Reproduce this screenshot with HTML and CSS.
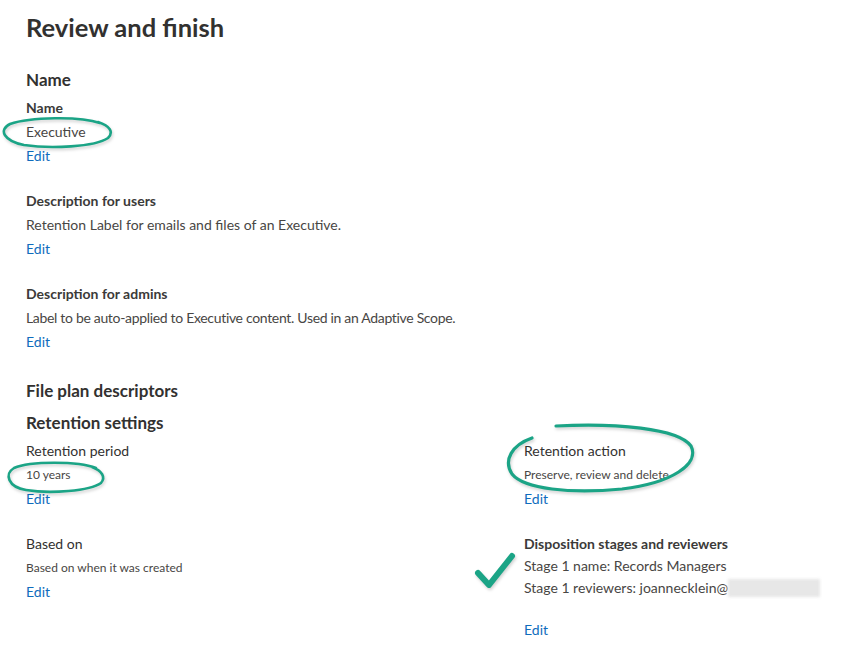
FILE: index.html
```html
<!DOCTYPE html>
<html lang="en">
<head>
<meta charset="utf-8">
<title>Review and finish</title>
<link rel="stylesheet" href="styles.css">
</head>
<body>
<main class="page">
  <h1 class="title">Review and finish</h1>

  <h2 class="section">Name</h2>
  <div class="field">
    <div class="label">Name</div>
    <div class="value">Executive</div>
    <a class="edit" href="#">Edit</a>
  </div>

  <div class="field">
    <div class="label">Description for users</div>
    <div class="value">Retention Label for emails and files of an Executive.</div>
    <a class="edit" href="#">Edit</a>
  </div>

  <div class="field">
    <div class="label">Description for admins</div>
    <div class="value condensed">Label to be auto-applied to Executive content. Used in an Adaptive Scope.</div>
    <a class="edit" href="#">Edit</a>
  </div>

  <h2 class="section section-gap">File plan descriptors</h2>
  <h2 class="section sub">Retention settings</h2>

  <div class="grid">
    <div class="cell">
      <div class="label plain">Retention period</div>
      <div class="value small">10 years</div>
      <a class="edit" href="#">Edit</a>
    </div>
    <div class="cell">
      <div class="label plain">Retention action</div>
      <div class="value small">Preserve, review and delete</div>
      <a class="edit" href="#">Edit</a>
    </div>
    <div class="cell">
      <div class="label plain">Based on</div>
      <div class="value small">Based on when it was created</div>
      <a class="edit" href="#">Edit</a>
    </div>
    <div class="cell tight">
      <div class="label">Disposition stages and reviewers</div>
      <div class="value">Stage 1 name: Records Managers</div>
      <div class="value">Stage 1 reviewers: joannecklein@<span class="redacted"></span></div>
      <a class="edit edit-far" href="#">Edit</a>
    </div>
  </div>
</main>

<svg class="marks" width="853" height="668" viewBox="0 0 853 668" aria-hidden="true">
  <g fill="none" stroke="#1ba486" stroke-linecap="round" stroke-linejoin="round" class="ink">
    <path d="M100 123 C80 116 30 117 10 124 C-2 130 4 141 24 145 C50 149 95 147 108 138 C114 132 110 126 98 122" stroke-width="2.6"/>
    <path d="M96 468 C78 461 30 461 14 468 C4 474 8 487 26 490 C50 494 90 491 101 483 C106 477 102 471 92 467" stroke-width="2.6"/>
    <path d="M556 426 C615 423 678 428 691 446 C700 464 672 483 622 489 C570 494 524 489 512 474 C503 460 512 445 532 438" stroke-width="3.2"/>
    <path d="M478 573 L489 585 L512 556" stroke-width="6"/>
  </g>
</svg>
</body>
</html>
```

FILE: styles.css
```css
html, body {
  margin: 0;
  padding: 0;
  background: #ffffff;
}

body {
  font-family: "Segoe UI", Lato, "Liberation Sans", sans-serif;
  color: #323130;
  width: 853px;
  height: 668px;
  overflow: hidden;
  position: relative;
}

.page {
  padding: 11px 0 0 26px;
}

.title {
  margin: 0;
  font-size: 25.5px;
  line-height: 32px;
  font-weight: 700;
  color: #323130;
}

.section {
  margin: 25px 0 4px;
  font-size: 17px;
  line-height: 24px;
  font-weight: 700;
  color: #323130;
}

.section-gap {
  margin-top: 25px;
  margin-bottom: 0;
}

.sub {
  margin-top: 8px;
  margin-bottom: 4px;
}

.field + .field {
  margin-top: 21px;
}

.label {
  font-size: 14px;
  line-height: 24px;
  font-weight: 700;
  color: #3b3a39;
}

.label.plain {
  font-weight: 400;
  color: #323130;
}

.value {
  font-size: 14px;
  line-height: 24px;
  color: #484644;
}

.value.condensed {
  letter-spacing: -0.32px;
}

.value.small {
  font-size: 12px;
}

.edit {
  display: block;
  font-size: 14px;
  line-height: 24px;
  color: #0f6cbd;
  text-decoration: none;
  width: max-content;
}

.grid {
  display: grid;
  grid-template-columns: 498px 1fr;
  row-gap: 21px;
}

.cell.tight {
  padding-top: 1px;
}

.cell.tight .label,
.cell.tight .value {
  line-height: 22px;
}

.edit-far {
  margin-top: 19px;
}

.redacted {
  display: inline-block;
  width: 92px;
  height: 18px;
  vertical-align: -4px;
  background: #e7e7e7;
  filter: blur(1.5px);
}

.marks {
  position: absolute;
  left: 0;
  top: 0;
  pointer-events: none;
}

.ink {
  filter: drop-shadow(1px 2px 1.5px rgba(0, 0, 0, 0.18));
}
```
